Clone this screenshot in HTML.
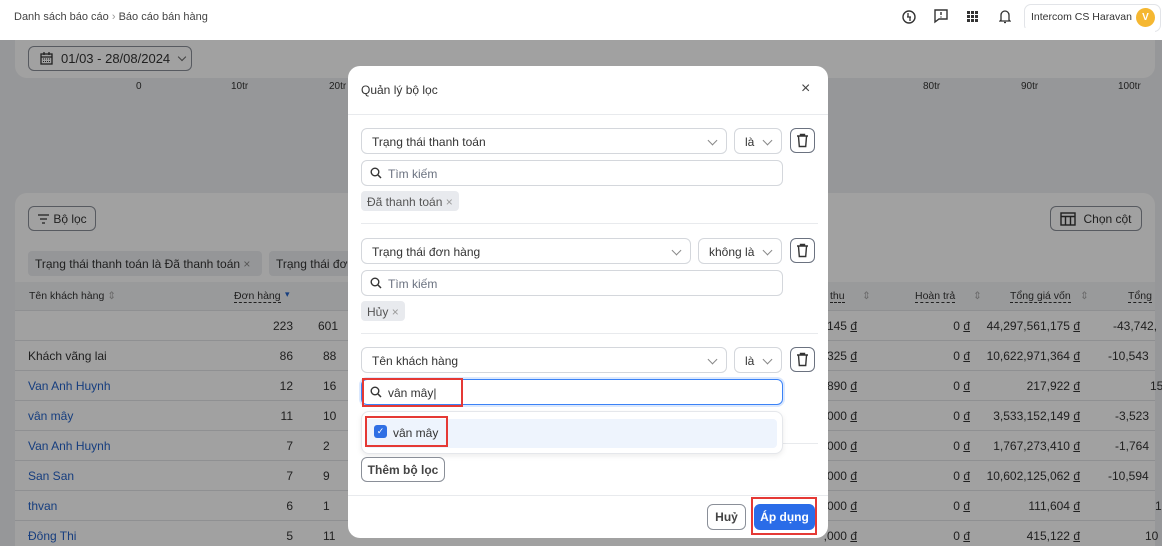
<!DOCTYPE html>
<html><head><meta charset="utf-8"><style>
*{box-sizing:border-box;margin:0;padding:0}
html{overflow:hidden;width:1162px;height:546px}
body{width:1162px;height:546px;overflow:hidden;position:relative;background:#eef0f2;font-family:"Liberation Sans",sans-serif;font-size:12px;color:#333}
.abs{position:absolute}
.top{left:0;top:0;width:1162px;height:40px;background:#fff}
.card{background:#fff;border-radius:12px}
.btn{position:absolute;border:1px solid #8a8f98;border-radius:6px;background:#fff;display:flex;align-items:center;justify-content:center;font-size:12px;color:#333}
.row{position:absolute;left:15px;width:1140px;height:30px;border-bottom:1px solid #e3e5e8;font-size:12px}
.row span{position:absolute;top:8px}
.blue{color:#2563c9}
.ovl{left:0;top:40px;width:1162px;height:506px;background:rgba(0,0,0,0.37)}
.modal{left:348px;top:66px;width:480px;height:472px;background:#fff;border-radius:12px}
.sel{position:absolute;border:1px solid #d4d7dc;border-radius:6px;height:26px;font-size:12px;color:#333;padding:6px 10px}
.chev{position:absolute;right:10px;top:8px;width:7px;height:7px;border-right:1.3px solid #888;border-bottom:1.3px solid #888;transform:rotate(45deg)}
.trash{position:absolute;width:25px;height:25px;border:1px solid #6b7280;border-radius:6px}
.chip{position:absolute;background:#e8eaee;border-radius:4px;height:20px;font-size:12px;color:#555;padding:4px 6px}
.hr{position:absolute;left:0;width:480px;height:1px;background:#e8eaed}
.red{position:absolute;border:2px solid #e53935}
</style></head><body>
<div class="abs top">
 <div class="abs" style="left:14px;top:11px;font-size:11px;color:#444">Danh sách báo cáo <span style="color:#999">›</span> Báo cáo bán hàng</div>
 <svg class="abs" style="left:902px;top:10px" width="14" height="14" viewBox="0 0 14 14"><circle cx="7" cy="7" r="6" fill="none" stroke="#333" stroke-width="1.4"/><path d="M6 3v4M8 7v4M5 7h4" stroke="#333" stroke-width="1.3"/></svg>
 <svg class="abs" style="left:934px;top:9px" width="14" height="15" viewBox="0 0 14 15"><path d="M1 1h12v9H5l-4 3z" fill="none" stroke="#333" stroke-width="1.4"/><path d="M7 3v3M7 7.5v1" stroke="#333" stroke-width="1.4"/></svg>
 <svg class="abs" style="left:967px;top:11px" width="11" height="11" viewBox="0 0 11 11" fill="#333"><rect x="0" y="0" width="3" height="3"/><rect x="4" y="0" width="3" height="3"/><rect x="8" y="0" width="3" height="3"/><rect x="0" y="4" width="3" height="3"/><rect x="4" y="4" width="3" height="3"/><rect x="8" y="4" width="3" height="3"/><rect x="0" y="8" width="3" height="3"/><rect x="4" y="8" width="3" height="3"/><rect x="8" y="8" width="3" height="3"/></svg>
 <svg class="abs" style="left:999px;top:9px" width="12" height="15" viewBox="0 0 12 15"><path d="M2 11V6a4 4 0 0 1 8 0v5l1 1H1z" fill="none" stroke="#333" stroke-width="1.3"/><path d="M5 13.5h2" stroke="#333" stroke-width="1.3"/></svg>
 <div class="abs" style="left:1024px;top:4px;width:137px;height:28px;border:1px solid #e2e4e8;border-radius:7px"></div>
 <div class="abs" style="left:1031px;top:11px;font-size:10.5px;color:#333;white-space:nowrap">Intercom CS Haravan</div>
 <div class="abs" style="left:1136px;top:8px;width:19px;height:19px;border-radius:50%;background:#f5b731;color:#fff;font-size:10px;font-weight:bold;text-align:center;line-height:19px">V</div>
</div>
<div class="abs card" style="left:15px;top:28px;width:1140px;height:50px;border-radius:0 0 12px 12px"></div>
<div class="btn" style="left:28px;top:46px;width:164px;height:25px;justify-content:flex-start;padding-left:11px;font-size:13px">
 <svg width="13" height="13" viewBox="0 0 13 13" style="margin-right:8px"><rect x="1" y="2" width="11" height="10" fill="none" stroke="#333" stroke-width="1.3"/><path d="M1 5h11M4 0v3M9 0v3" stroke="#333" stroke-width="1.3"/><path d="M3 7h7M3 9.5h7" stroke="#333" stroke-dasharray="1 1"/></svg>01/03 - 28/08/2024<span style="display:inline-block;width:6px;height:6px;border-right:1.3px solid #666;border-bottom:1.3px solid #666;transform:rotate(45deg);margin:-3px 0 0 9px"></span></div>
<div class="abs" style="top:81px;left:0;width:1162px;font-size:10px;color:#333">
 <span class="abs" style="left:136px">0</span><span class="abs" style="left:231px">10tr</span><span class="abs" style="left:329px">20tr</span><span class="abs" style="left:923px">80tr</span><span class="abs" style="left:1021px">90tr</span><span class="abs" style="left:1118px">100tr</span></div>
<div class="abs card" style="left:15px;top:193px;width:1140px;height:353px;border-radius:12px 12px 0 0"></div>
<div class="btn" style="left:28px;top:206px;width:68px;height:25px;font-size:12px"><svg width="13" height="10" viewBox="0 0 13 10" style="margin-right:3px"><path d="M1 1h11M3 5h7M5 9h3" stroke="#333" stroke-width="1.3"/></svg>Bộ lọc</div>
<div class="btn" style="left:1050px;top:206px;width:92px;height:25px;font-size:12px"><svg width="16" height="14" viewBox="0 0 16 14" style="margin-right:7px"><rect x="1" y="1" width="14" height="12" fill="none" stroke="#333" stroke-width="1.4"/><path d="M1 4.5h14M5.5 4.5V13M10.5 4.5V13" stroke="#333" stroke-width="1.4"/></svg>Chọn cột</div>
<div class="chip" style="left:28px;top:251px;height:25px;width:234px;padding:6px 7px;font-size:12px;color:#333;background:#eceef1;white-space:nowrap">Trạng thái thanh toán là Đã thanh toán <span style="color:#888">×</span></div>
<div class="chip" style="left:269px;top:251px;height:25px;width:90px;padding:6px 7px;font-size:12px;color:#333;background:#eceef1;overflow:hidden;white-space:nowrap">Trạng thái đơn hàng</div>
<div class="abs" style="left:15px;top:282px;width:1140px;height:29px;background:#f3f4f6;border-bottom:1px solid #e3e5e8;font-size:10.5px">
 <span class="abs" style="left:14px;top:8px">Tên khách hàng <span style="color:#aaa">⇕</span></span>
 <span class="abs" style="left:219px;top:8px;border-bottom:1px dashed #333">Đơn hàng</span><span class="abs" style="left:270px;top:7px;color:#2563c9;font-size:9px">▾</span>
 <span class="abs" style="left:815px;top:8px;border-bottom:1px dashed #333">thu</span><span class="abs" style="left:847px;top:8px;color:#aaa">⇕</span>
 <span class="abs" style="left:900px;top:8px;border-bottom:1px dashed #333">Hoàn trả</span><span class="abs" style="left:958px;top:8px;color:#aaa">⇕</span>
 <span class="abs" style="left:995px;top:8px;border-bottom:1px dashed #333">Tổng giá vốn</span><span class="abs" style="left:1065px;top:8px;color:#aaa">⇕</span>
 <span class="abs" style="left:1113px;top:8px;border-bottom:1px dashed #333">Tổng</span>
</div>
<div class="row" style="top:311px"><span style="right:862px">223</span><span style="left:303px">601</span><span style="right:298px">,145 <u>đ</u></span><span style="right:185px">0 <u>đ</u></span><span style="right:75px">44,297,561,175 <u>đ</u></span><span style="left:1098px">-43,742,</span></div>
<div class="row" style="top:341px"><span style="left:13px">Khách vãng lai</span><span style="right:862px">86</span><span style="left:308px">88</span><span style="right:298px">325 <u>đ</u></span><span style="right:185px">0 <u>đ</u></span><span style="right:75px">10,622,971,364 <u>đ</u></span><span style="left:1093px">-10,543</span></div>
<div class="row" style="top:371px"><span class="blue" style="left:13px">Van Anh Huynh</span><span style="right:862px">12</span><span style="left:308px">16</span><span style="right:298px">890 <u>đ</u></span><span style="right:185px">0 <u>đ</u></span><span style="right:75px">217,922 <u>đ</u></span><span style="left:1135px">15</span></div>
<div class="row" style="top:401px"><span class="blue" style="left:13px">vân mây</span><span style="right:862px">11</span><span style="left:308px">10</span><span style="right:298px">000 <u>đ</u></span><span style="right:185px">0 <u>đ</u></span><span style="right:75px">3,533,152,149 <u>đ</u></span><span style="left:1100px">-3,523</span></div>
<div class="row" style="top:431px"><span class="blue" style="left:13px">Van Anh Huynh</span><span style="right:862px">7</span><span style="left:308px">2</span><span style="right:298px">000 <u>đ</u></span><span style="right:185px">0 <u>đ</u></span><span style="right:75px">1,767,273,410 <u>đ</u></span><span style="left:1100px">-1,764</span></div>
<div class="row" style="top:461px"><span class="blue" style="left:13px">San San</span><span style="right:862px">7</span><span style="left:308px">9</span><span style="right:298px">000 <u>đ</u></span><span style="right:185px">0 <u>đ</u></span><span style="right:75px">10,602,125,062 <u>đ</u></span><span style="left:1093px">-10,594</span></div>
<div class="row" style="top:491px"><span class="blue" style="left:13px">thvan</span><span style="right:862px">6</span><span style="left:308px">1</span><span style="right:298px">000 <u>đ</u></span><span style="right:185px">0 <u>đ</u></span><span style="right:75px">111,604 <u>đ</u></span><span style="left:1140px">1</span></div>
<div class="row" style="top:521px"><span class="blue" style="left:13px">Đông Thi</span><span style="right:862px">5</span><span style="left:308px">11</span><span style="right:298px">,000 <u>đ</u></span><span style="right:185px">0 <u>đ</u></span><span style="right:75px">415,122 <u>đ</u></span><span style="left:1130px">10</span></div>
<div class="abs ovl"></div>
<div class="abs modal">
 <div class="abs" style="left:13px;top:17px;font-size:12px;color:#333">Quản lý bộ lọc</div>
 <div class="abs" style="left:453px;top:14px;font-size:16px;color:#444">×</div>
 <div class="hr" style="top:48px"></div>
 <div class="sel" style="left:13px;top:62px;width:366px">Trạng thái thanh toán<i class="chev"></i></div>
 <div class="sel" style="left:386px;top:62px;width:48px">là<i class="chev"></i></div>
 <div class="trash" style="left:442px;top:62px"><svg width="23" height="23" viewBox="0 0 23 23"><path d="M6 7h11M9.5 7V5.5h4V7M7.5 7.5l.8 10h6.4l.8-10" fill="none" stroke="#333" stroke-width="1.4"/></svg></div>
 <div class="sel" style="left:13px;top:94px;width:422px;padding-left:26px;color:#6b7280">Tìm kiếm</div>
 <svg class="abs" style="left:22px;top:101px" width="12" height="12" viewBox="0 0 12 12"><circle cx="5" cy="5" r="3.8" fill="none" stroke="#333" stroke-width="1.4"/><path d="M8 8l3 3" stroke="#333" stroke-width="1.5"/></svg>
 <div class="chip" style="left:13px;top:125px">Đã thanh toán <span style="color:#999">×</span></div>
 <div class="hr" style="top:157px;left:13px;width:457px"></div>
 <div class="sel" style="left:13px;top:172px;width:330px">Trạng thái đơn hàng<i class="chev"></i></div>
 <div class="sel" style="left:350px;top:172px;width:84px">không là<i class="chev"></i></div>
 <div class="trash" style="left:442px;top:172px"><svg width="23" height="23" viewBox="0 0 23 23"><path d="M6 7h11M9.5 7V5.5h4V7M7.5 7.5l.8 10h6.4l.8-10" fill="none" stroke="#333" stroke-width="1.4"/></svg></div>
 <div class="sel" style="left:13px;top:204px;width:422px;padding-left:26px;color:#6b7280">Tìm kiếm</div>
 <svg class="abs" style="left:22px;top:211px" width="12" height="12" viewBox="0 0 12 12"><circle cx="5" cy="5" r="3.8" fill="none" stroke="#333" stroke-width="1.4"/><path d="M8 8l3 3" stroke="#333" stroke-width="1.5"/></svg>
 <div class="chip" style="left:13px;top:235px">Hủy <span style="color:#999">×</span></div>
 <div class="hr" style="top:267px;left:13px;width:457px"></div>
 <div class="sel" style="left:13px;top:281px;width:366px">Tên khách hàng<i class="chev"></i></div>
 <div class="sel" style="left:386px;top:281px;width:48px">là<i class="chev"></i></div>
 <div class="trash" style="left:442px;top:281px"><svg width="23" height="23" viewBox="0 0 23 23"><path d="M6 7h11M9.5 7V5.5h4V7M7.5 7.5l.8 10h6.4l.8-10" fill="none" stroke="#333" stroke-width="1.4"/></svg></div>
 <div class="sel" style="left:13px;top:313px;width:422px;padding-left:26px;border-color:#3b82f6;box-shadow:0 0 0 2px #dbe8fd">vân mây|</div>
 <svg class="abs" style="left:22px;top:320px" width="12" height="12" viewBox="0 0 12 12"><circle cx="5" cy="5" r="3.8" fill="none" stroke="#333" stroke-width="1.4"/><path d="M8 8l3 3" stroke="#333" stroke-width="1.5"/></svg>
 <div class="hr" style="top:377px;left:13px;width:457px"></div>
 <div class="abs" style="left:13px;top:345px;width:422px;height:43px;background:#fff;border:1px solid #e5e7eb;border-radius:8px;box-shadow:0 2px 6px rgba(0,0,0,.08)"></div>
 <div class="abs" style="left:17px;top:353px;width:412px;height:29px;background:#eef4fd;border-radius:4px"></div>
 <div class="abs" style="left:26px;top:359px;width:13px;height:13px;background:#2f6fe4;border-radius:3px;color:#fff;font-size:9px;text-align:center;line-height:13px">✓</div>
 <div class="abs" style="left:45px;top:360px;font-size:12px;color:#333">vân mây</div>
 <div class="red" style="left:14px;top:312px;width:101px;height:29px"></div>
 <div class="red" style="left:17px;top:350px;width:83px;height:31px"></div>
 <div class="btn" style="left:13px;top:391px;width:84px;height:25px;font-weight:bold;color:#444">Thêm bộ lọc</div>
 <div class="hr" style="top:429px"></div>
 <div class="btn" style="left:359px;top:438px;width:39px;height:26px;font-weight:bold;color:#444">Huỷ</div>
 <div class="abs" style="left:406px;top:438px;width:61px;height:26px;background:#2a6ce8;border-radius:6px;color:#fff;font-weight:bold;font-size:12px;text-align:center;line-height:26px">Áp dụng</div>
 <div class="red" style="left:403px;top:431px;width:66px;height:38px"></div>
</div>
</body></html>
